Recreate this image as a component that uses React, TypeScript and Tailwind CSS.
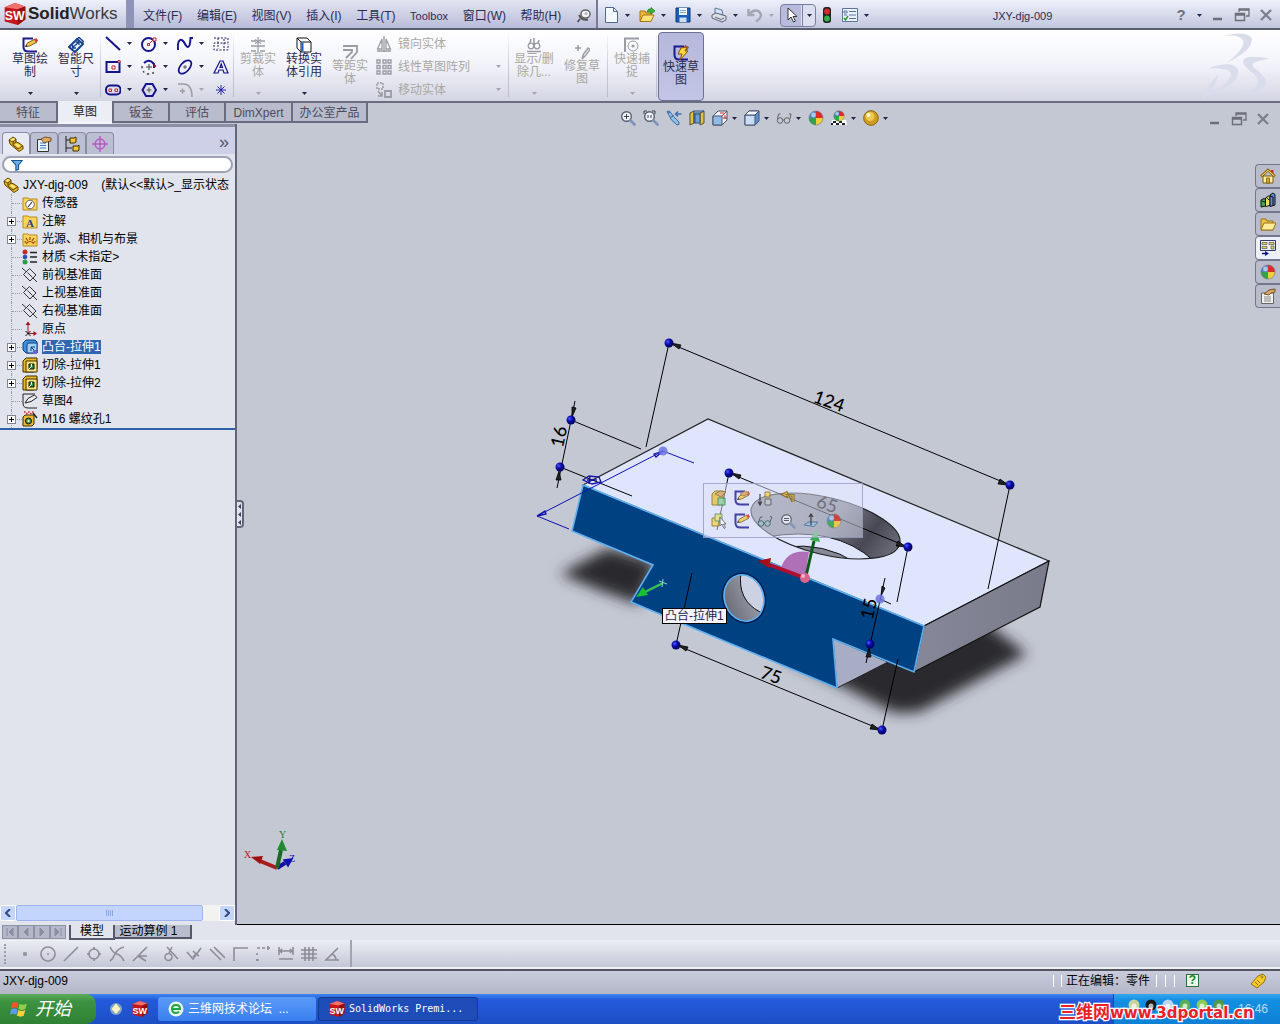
import React from "react";

const Svg = ({
  children,
  size = "w-4 h-4",
}: {
  children: React.ReactNode;
  size?: string;
}) => (
  <svg viewBox="0 0 16 16" className={`${size} shrink-0`} fill="none" aria-hidden="true">
    {children}
  </svg>
);

const Arrow = ({ off = false }: { off?: boolean }) => (
  <svg viewBox="0 0 5 3" className="w-[5px] h-[3px] shrink-0" aria-hidden="true">
    <path d="M0 0h5L2.5 3z" fill={off ? "#a4a6b0" : "#23264a"} />
  </svg>
);

const navy = "#14148c";
const gray = "#9a9ba3";

const ball = (
  <>
    <path d="M8 8V1a7 7 0 0 0-7 7z" fill="#4a86c8" />
    <path d="M8 8V1a7 7 0 0 1 7 7z" fill="#dd2c2a" />
    <path d="M8 8H1a7 7 0 0 0 7 7z" fill="#2fa548" />
    <path d="M8 8h7a7 7 0 0 1-7 7z" fill="#f0cf3c" />
    <circle cx="8" cy="8" r="7" stroke="#5a6a78" strokeOpacity=".5" />
    <circle cx="5.5" cy="5" r="2.4" fill="#fff" fillOpacity=".55" />
  </>
);
const sketchL = <path d="M11 1.500H1.500V10q0 4.500 5 4.500H15" stroke="#1b1b8f" strokeWidth="2" />;
const pencil = (
  <>
    <path d="M3.500 9.500l2-3.500L13 2l2 3-7.500 4z" fill="#f5cb45" stroke="#6b4a12" strokeWidth=".9" />
    <path d="M12 2.500L14.500 1 16 4l-2.300 1.300z" fill="#cf3a30" />
    <path d="M3.300 10l2-.6-1-1.600z" fill="#111" />
  </>
);
const part = (
  <>
    <path d="M1 4l4-3 3 2v3l3 1 4 3v3l-4 2.500-9-7.500z" fill="#e8b820" stroke="#5f4203" />
    <path d="M1 4l4 2 3-2.500M5 6v3l5 4 4.500-3M8 6l-2.500 2" stroke="#5f4203" />
    <path d="M2 4l3-2 2 1-2.500 2zM7 8.500l2-1 3.500 2.500-2 1.500z" fill="#ffe98a" />
  </>
);
const folder = <path d="M1 3h5l1 1h8v11H1z" fill="#fbd45a" stroke="#b98a1c" />;
const plane = (
  <path d="M7.500 1.500l6.500 6.500-6 6L1.500 7.500zM0 1l4 3.500M11 11l4 4M5.500 5.500l5 5" stroke="#333" />
);
const cutBox = (
  <>
    <path d="M1 4l3-3h11v11l-3 3H1z" fill="#e9b92a" stroke="#3f2f05" />
    <path d="M4 4h11v11H4z" fill="#fbe27a" stroke="#3f2f05" />
    <path d="M7 7h5v5H7z" fill="#2f8f3a" stroke="#111" />
    <path d="M7 12l2.500-2.500V7" stroke="#fff" />
  </>
);
const lens = (
  <>
    <circle cx="6.500" cy="6.500" r="4.800" fill="#eef2f8" stroke="#596070" strokeWidth="1.400" />
    <path d="M10.500 10.500l4 4" stroke="#7d93b8" strokeWidth="2.600" strokeLinecap="round" />
  </>
);
const glasses = (
  <>
    <circle cx="4" cy="10.500" r="2.800" fill="#9fc0cc" stroke="#3b5560" />
    <circle cx="10.500" cy="10.500" r="2.800" fill="#9fc0cc" stroke="#3b5560" />
    <path d="M1.500 9l2-5h2M13 9l2-5-2-.5M6.800 10h1" stroke="#3b5560" />
  </>
);
const swCube = (
  <>
    <path d="M.5 3L8 0l7.500 2.500V12L10 16 .5 13.500z" fill="#c3171d" />
    <path d="M.5 3L8 0l7.500 2.500L10 4.500z" fill="#f0706a" />
    <path d="M10 4.500l5.500-2V12L10 16z" fill="#960d12" />
    <text x=".5" y="12.500" fontSize="9" fontWeight="bold" fontFamily="Liberation Sans, sans-serif" fill="#fff">SW</text>
  </>
);

const icons: Record<string, React.ReactNode> = {
  ball,
  part,
  plane,
  cutBox,
  glasses,
  swCube,
  sketch: <>{sketchL}{pencil}</>,
  dim: (
    <>
      <path d="M1 10l8-8 6 5-8 8z" fill="#eaf2ff" stroke="#16418f" strokeWidth="2" />
      <path d="M4.500 10.500l6-5M7.500 5h3.500v3M4.500 7.500v3.500H8" stroke="#16418f" strokeWidth="1.300" />
      <path d="M9 2l2-1.500 4.500 4L14 6" stroke="#16418f" strokeWidth="1.500" />
    </>
  ),
  line: <path d="M1 1l14 13" stroke={navy} strokeWidth="2" />,
  circle: (
    <>
      <circle cx="7.500" cy="8.500" r="6.500" stroke={navy} strokeWidth="2" />
      <path d="M7.500 8.500l5-5" stroke="#c02030" />
      <path d="M6.500 7.500h2v2h-2zM12 2h3v3h-3z" stroke="#c02030" fill="#fff" />
    </>
  ),
  spline: <path d="M1 14C0 2 5 2 7.500 7S13 14 13.500 2H16" stroke={navy} strokeWidth="2" />,
  area: <path d="M1 2h14v5H1v7h14V8M5 2v11M11 3v11" stroke="#23236b" strokeDasharray="2 1.500" />,
  rect: (
    <>
      <path d="M1.500 3h13v10h-13z" stroke={navy} strokeWidth="2" />
      <path d="M7 7h3v3H7zM13 1.500h2v2h-2z" stroke="#c02030" fill="#fff" />
    </>
  ),
  arc: (
    <>
      <path d="M3 4q5-5 10 1v4" stroke={navy} strokeWidth="2" />
      <path d="M1 7q0 8 7 8 5 0 6-4" stroke="#444" strokeWidth="1.500" strokeDasharray="2 3" />
      <path d="M5 8h6M8 5v6" stroke="#444" />
      <circle cx="14" cy="7" r="1.300" fill="#c02030" />
    </>
  ),
  ellipse: (
    <>
      <ellipse cx="8" cy="8" rx="8" ry="4.500" transform="rotate(-48 8 8)" stroke={navy} strokeWidth="1.800" />
      <path d="M6 8h4M8 6v4" stroke="#555" />
    </>
  ),
  text: <path d="M1 14h4l1-3h4l1 3h4L10 2H7zM7 8.500l1.200-3.500L9.500 8.500z" stroke={navy} strokeWidth="1.200" />,
  slot: (
    <>
      <rect x="1" y="3.500" width="14.500" height="9" rx="4" stroke={navy} strokeWidth="2" />
      <path d="M4 7h2.500v2.500H4zM10 7h2.500v2.500H10z" stroke="#c02030" fill="#fff" />
    </>
  ),
  polygon: <><path d="M5 2h6.500L15 8l-3.500 6H5L1.500 8z" stroke={navy} strokeWidth="2" /><path d="M5.500 8h5M8 5.500v5" stroke="#555" /></>,
  fillet: <path d="M1 2h5q9 0 9 13M3 9h5M5.500 6.500v5" stroke={gray} strokeWidth="1.500" />,
  point: <path d="M8 3v10M3 8h10M4.500 4.500l7 7M11.500 4.500l-7 7" stroke="#2424a8" />,
  trim: (
    <>
      <path d="M1 4h5M10 4h5M1 9h14M1 14h5M10 14h5" stroke={gray} strokeWidth="1.500" />
      <path d="M8 0v16M5 2.500l6 4M11 2.500l-6 4" stroke={gray} strokeWidth="1.200" />
    </>
  ),
  convert: (
    <>
      <path d="M1 1h10l4 4v10H5l-4-4z" fill="#fff" stroke="#111" />
      <path d="M1 1l4 4h10M5 5v10" stroke="#111" />
      <path d="M6.500 5.500v9" stroke="#1d5bd0" strokeWidth="2" />
    </>
  ),
  offset: <path d="M1 2h14v6l-6 7M1 6h9v2l-6 6" stroke={gray} strokeWidth="1.800" />,
  mirror: <path d="M8 0v16M6 3L1.500 13H6zM10 3l4.500 10H10zM1 15h14" stroke={gray} strokeWidth="1.300" />,
  pattern: (
    <path d="M1 1h3v3H1zM7 1h3v3H7zM12 1h3v3h-3zM1 6.500h3v3H1zM7 6.500h3v3H7zM12 6.500h3v3h-3zM1 12h3v3H1zM7 12h3v3H7zM12 12h3v3h-3z" stroke={gray} strokeWidth="1.400" />
  ),
  move: (
    <>
      <path d="M1 1h6v6H1z" stroke={gray} strokeWidth="1.500" strokeDasharray="2 1" />
      <path d="M9 9h6v6H9z" stroke={gray} strokeWidth="1.800" />
      <path d="M2 9l4 5M6 10v4H2" stroke={gray} strokeWidth="1.500" />
    </>
  ),
  relations: (
    <>
      <circle cx="5" cy="9" r="2.800" stroke={gray} strokeWidth="1.300" />
      <circle cx="11" cy="9" r="2.800" stroke={gray} strokeWidth="1.300" />
      <path d="M8 1v10M4 6l1-4M12 6l1-3M1 14.500h14" stroke={gray} strokeWidth="1.500" />
    </>
  ),
  repair: <path d="M1 4h6M4 1v6M8 15l1.500-5L14 4l2 1.500L11 12z" stroke={gray} strokeWidth="1.500" />,
  snap: (
    <>
      <path d="M1 15V1.500h14" stroke={gray} strokeWidth="2" />
      <circle cx="9" cy="9" r="5" stroke={gray} />
      <circle cx="9" cy="9" r="1.600" fill={gray} />
    </>
  ),
  rapid: (
    <>
      {sketchL}
      <path d="M12 .5L15.500 2 14 5l-3-1.500z" fill="#d86a30" stroke="#6b3a10" strokeWidth=".6" />
      <path d="M8 3l6-1-2 4h3l-8 9 2-6H5z" fill="#ffd938" stroke="#8a4d10" />
    </>
  ),
  new: <><path d="M2.500.5h8l4 4v11h-12z" fill="#f4f8ff" stroke="#51688c" /><path d="M10.500.5v4h4" stroke="#51688c" /></>,
  open: (
    <>
      <path d="M1 4h5l1 2h5v8H1z" fill="#f0b93a" stroke="#a87410" />
      <path d="M4 8h11l-3 6.500H1z" fill="#ffe27a" stroke="#a87410" />
      <path d="M8 5q1-4 4-3V.5L16 4l-4 3V5z" fill="#3db53b" stroke="#1c7d22" strokeWidth=".7" />
    </>
  ),
  save: <><path d="M1 1h14v14H1z" fill="#1d5fb8" stroke="#0d3877" /><path d="M4 1h8v7H4z" fill="#f2f6ff" /><path d="M4.500 10.500h7V15h-7z" fill="#cfdcf2" /><path d="M5 3.500h6M5 5.500h6" stroke="#8aa" /></>,
  print: <><path d="M4 1l7 2 1 5H4z" fill="#cfe2fa" stroke="#6b7894" /><path d="M1 8l4-2 10 3v4l-4 2-10-4z" fill="#dcdfe6" stroke="#5c6272" /><path d="M4 10l6 2.500 3-1.500" stroke="#5c6272" /></>,
  undo: <path d="M1.500 2v6h6M2 7.500q5-6 10-3 5 5-3 10" stroke="#a3a7b5" strokeWidth="2.500" />,
  cursor: <path d="M4 1v12l3-3 2.500 5 2-1-2.500-4.500h4z" fill="#fff" stroke="#333" />,
  traffic: (
    <>
      <rect x="4" y="0" width="8" height="16" rx="3" fill="#222" />
      <circle cx="8" cy="4.500" r="2.900" fill="#d52a2a" />
      <circle cx="8" cy="11.500" r="2.900" fill="#33b04a" />
    </>
  ),
  options: <><path d="M.5 1.500h15v13H.5z" fill="#eaf1fa" stroke="#5c7899" /><path d="M2 4h3v2H2zM7 4.500h7M7 8h7M7 11.500h7M2 8h3" stroke="#5c7899" /><path d="M2 11l1.500 2L6 9" stroke="#279a32" strokeWidth="1.500" /></>,
  pin: <><path d="M4 11l-2.500 3" stroke="#444" strokeWidth="1.500" /><ellipse cx="9.500" cy="6" rx="4.500" ry="4" fill="#f3f3f7" stroke="#666" strokeWidth="1.500" /><path d="M3 7q3 6 9 4.500" stroke="#555" strokeWidth="2" /><circle cx="10" cy="5.500" r="1.500" fill="#b5b6c2" /></>,
  min: <path d="M3 12h9" stroke="#6c6f7a" strokeWidth="2.500" />,
  restore: <><path d="M5 5V2h10v7h-3" stroke="#6c6f7a" strokeWidth="1.300" /><path d="M5 3h10" stroke="#6c6f7a" strokeWidth="1.500" /><path d="M1.500 6.500h9v7h-9zM1 8h10" stroke="#6c6f7a" strokeWidth="1.400" /></>,
  close: <path d="M3 3l10 10M13 3L3 13" stroke="#7d808c" strokeWidth="2.300" />,
  zoomFit: <>{lens}<path d="M4 6.500h5M6.500 4v5" stroke="#444" /></>,
  zoomArea: <>{lens}<path d="M1 1h3M1 1v3M12 1h-3M12 1v3M5 5v3M8 5v3" stroke="#444" /></>,
  prevView: <><path d="M1 1.500l2.500-.5 4 5.500 5.500 5.500q1 3-2 3L5.500 10z" fill="#8fbfe8" stroke="#3f6a9e" /><path d="M4 7.500l4-2M2 3l2-1" stroke="#3f6a9e" /><path d="M15.500 4H10M12 1.500L9.500 4 12 6.500" stroke="#3a6fb5" strokeWidth="1.500" /></>,
  section: <><path d="M1 3l4-2v12l-4 2zM11 3l4-2v12l-4 2z" fill="#e2c33e" stroke="#59512a" /><path d="M5 1h10l-4 2H6v10l-1 0z" fill="#a9c8ea" stroke="#34507a" /><path d="M6 4h5v9H6z" fill="#6ea0d8" stroke="#34507a" /></>,
  orient: <><path d="M1 6l5-5h9v9l-5 5H1z" fill="#eef3fb" stroke="#4a5468" /><path d="M1 6h9v9H1z" fill="#8fbbe6" stroke="#4a5468" /><path d="M10 6l5-5M8 3h4M13 5v4M11 8h4" stroke="#b33" /></>,
  display: <><path d="M1 5l4-4h10v10l-4 4H1z" fill="#5d8fd6" stroke="#43506a" /><path d="M1 5h10v10H1z" fill="#c9ddf5" stroke="#43506a" /><path d="M1 5l4-4h10l-4 4z" fill="#f4f8ff" stroke="#43506a" /></>,
  hide: <g opacity=".75"><circle cx="4" cy="10.500" r="2.800" stroke="#444" /><circle cx="11" cy="10.500" r="2.800" stroke="#444" /><path d="M1.500 9l1-5h2M14 9l1-5h-2M6.800 10h1.500" stroke="#444" /></g>,
  scene: <><path d="M1 10h14l1 5H0z" fill="#fff" /><path d="M2 11h3v2H2zM8 11h3v2H8zM5 13h3v2H5zM11 13h3v2h-3zM0 13h2v2H0z" fill="#222" /><g transform="translate(2 0) scale(.75)">{ball}</g></>,
  gold: <><circle cx="8" cy="8" r="7.300" fill="#cf9d20" stroke="#8a6410" /><circle cx="7" cy="6.500" r="4.500" fill="#ecc84e" /><circle cx="5.500" cy="5" r="2" fill="#fff6cc" /></>,
  property: <><path d="M1.500 3.500h11v12h-11z" fill="#eaf4ff" stroke="#333" /><path d="M4 7h6M4 9.500h6M4 12h6" stroke="#3c7cc4" /><path d="M5 3l4-2 6 1v3l-4 1-3 1z" fill="#e0a960" stroke="#5b3a10" strokeWidth=".8" /></>,
  config: <><path d="M2 0v16M2 4h4M2 12h6" stroke="#222" /><path d="M6 2h4l2-1v5l-2 1H6zM9 10h5l1-1v5l-1 1H9z" fill="#f2c62e" stroke="#3f2f05" /></>,
  target: <><circle cx="8" cy="8" r="5" stroke="#b85cc4" strokeWidth="1.500" /><path d="M8 0v16M0 8h16" stroke="#b85cc4" strokeWidth="1.500" /></>,
  filter: <path d="M1 2h14L10 8v6l-3.500 1V8z" fill="#6db2ee" stroke="#1b568f" strokeWidth="1.500" />,
  sensor: <>{folder}<circle cx="8" cy="9.500" r="4.300" fill="#fff" stroke="#666" /><path d="M6 12l4-5" stroke="#333" strokeWidth="1.200" /></>,
  note: <>{folder}<text x="4" y="13.500" fontSize="11" fontWeight="bold" fontFamily="Liberation Serif, serif" fill="#2a3f90">A</text></>,
  light: <>{folder}<path d="M4 13q4-5 8 0M8 6v3M4 7l2 3M12 7l-2 3M2.500 10.500l2 1M13.500 10.500l-2 1" stroke="#a0400c" strokeWidth="1.200" /></>,
  material: <><circle cx="3" cy="3" r="2.500" fill="#c02a2a" /><circle cx="3" cy="8" r="2.300" fill="#2a50c0" /><circle cx="3" cy="13" r="2.500" fill="#2aa040" /><path d="M8 3.500h7M8 8h7M8 13h7" stroke="#222" strokeWidth="1.500" /></>,
  origin: <><path d="M6 13V3M6 12.500h7" stroke="#a5121c" /><path d="M3.500 4L6 .5 8.500 4zM11.500 10l3.500 2.500-3.500 2.500z" fill="#a5121c" /><path d="M3.500 10l5 5M8.500 10l-5 5" stroke="#111" /></>,
  boss: <><path d="M1 4l3-3h9l2 2v11H4l-3-3z" fill="#3f8fdc" stroke="#0d3f7a" /><path d="M5 6q0-2 2-2h8v10H5z" fill="#a5d0f5" stroke="#0d3f7a" /><path d="M9 8l6 6M9 12V8h4" stroke="#0d3f7a" /><path d="M11 11h4v4h-4z" fill="#6d63cc" /></>,
  sketch4: <><path d="M13 1H1v9q0 5 5 5h9" stroke="#222" /><path d="M3 10l3-4.500L12.500 2 15 4.500 9 8.500z" fill="#eee" stroke="#222" /></>,
  hole: <><path d="M1 6l2-2h9v9l-2 2H1z" fill="#e9b92a" stroke="#3f2f05" /><circle cx="6.500" cy="10" r="3" fill="#4f9f45" stroke="#111" /><circle cx="6.500" cy="10" r="1" fill="#fff" /><path d="M2 1h1.500M6 1h1.500M10 1h1.500M4 2.500h1.500M8 2.500h1.500" stroke="#d02020" strokeWidth="1.300" /><path d="M11 2l4 5" stroke="#222" strokeWidth="1.500" /></>,
  home: <><path d="M3 8h10v7H3z" fill="#fff0a0" stroke="#7c5a10" /><path d="M11 2h2.500v4H11z" fill="#c03030" /><path d="M1 8.500L8 2l7 6.500" stroke="#8b6410" strokeWidth="2.500" /><path d="M1.500 8L8 2.300 14.500 8" stroke="#ffe070" /><path d="M6.500 10h3v5h-3z" fill="#d9a53a" stroke="#7c5a10" strokeWidth=".8" /></>,
  library: <><path d="M1 8l3-1.500 1.500 1V14L1 15z" fill="#3faa4c" stroke="#111" /><path d="M5.500 6l3-2 1.500 1v8.500l-4.500 1z" fill="#ecdf62" stroke="#111" /><path d="M10 3l3-2 2 1.500V13l-5 1.500z" fill="#5b8ad8" stroke="#111" /><path d="M2 9l3 1M6 5l3 3M10 4l3 1v9" stroke="#111" /></>,
  explorer: <><path d="M1 3h5l1 2h6v9H1z" fill="#e9c24a" stroke="#9a7316" /><path d="M4 7h12l-3 7H1z" fill="#fdeb9b" stroke="#9a7316" /></>,
  palette: <><path d="M.5.500h15v10H.5z" fill="#eef" stroke="#333a66" /><path d="M2 2.500h5v2H2zM2 6.500h5v2H2zM9 2.500h5v2H9zM11 6h3v3h-3z" fill="#e5d65a" stroke="#555" strokeWidth=".7" /><path d="M2 13.500h5" stroke="#14148c" strokeWidth="1.500" /><path d="M5 11l4 2.500L5 16z" fill="#14148c" /></>,
  custom: <><path d="M1.500 5h12v10.500h-12z" fill="#f1f1ee" stroke="#666" /><path d="M4 9h7M4 11h7M4 13h7" stroke="#888" /><path d="M4 6l5-4 6-1v3l-4 1-2 2z" fill="#dba764" stroke="#5b3a10" strokeWidth=".8" /></>,
  editFeature: <><path d="M1 4l3-3h8v10l-3 4H1z" fill="#e9c347" stroke="#8a6b18" /><path d="M4 4l5-3 6 1-5 5z" fill="#d8a15c" stroke="#8a6b18" /><path d="M7 8h7v7H7z" fill="#8fd09a" stroke="#2b7d3b" /></>,
  editSketch: <>{sketchL}{pencil}<path d="M6 4l5-3 4 2-5 3z" fill="#d8a15c" stroke="#8a5b28" strokeWidth=".7" /></>,
  rollback: <><path d="M3 4v10M1 11.500L3 15l2-3.500" stroke="#222" strokeWidth="1.200" /><path d="M8 2h5v5H8z" fill="#f2d65a" stroke="#8a6b18" /><path d="M8 9h6v6H8z" fill="#c5c8cc" stroke="#555" /></>,
  suppress: <path d="M14 12V4.500H5M7 1.500L1.500 4.500 7 7.500V6h5v6z" fill="#f0c93a" stroke="#8a6b18" strokeWidth="1.200" />,
  selectOther: <><path d="M1 5h7v8H1z" fill="#efd257" stroke="#8a6b18" /><path d="M4 1h7v7H4z" fill="#efe07a" stroke="#459050" /><path d="M9 4v9l2-2 2 4.500 1.500-1-2-3.500H15z" fill="#fff" stroke="#555" /></>,
  zoomSel: <>{lens}<path d="M4 5.500h5M4 7.500h5" stroke="#445" /></>,
  normal: <><path d="M1 12l4-3h10l-4 4.500z" fill="#9ec0e2" stroke="#3c6796" /><path d="M8 12V1M6 4l2-3 2 3" stroke="#222" strokeWidth="1.200" /></>,
  tag: <><path d="M1 11l7-8 5-2 3 3-2 5-7 6z" fill="#f5c928" stroke="#92700a" /><circle cx="12" cy="4" r="1" fill="#fff" stroke="#92700a" /><path d="M5 9l3 3M7 7l3 3" stroke="#92700a" /></>,
};

const Icon = ({ name }: { name: string }) => <Svg>{icons[name]}</Svg>;

// icon with a drop-down arrow beside it
const Cell = ({ icon, off, label }: { icon: string; off?: boolean; label: string }) => (
  <button aria-label={label} className="flex items-center gap-[6px] w-9 h-[23px]">
    <Icon name={icon} />
    <Arrow off={off} />
  </button>
);

const Divider = () => (
  <div className="w-px my-1 mx-px shrink-0 bg-linear-to-b from-[#f4f4fa] via-[#c9cbd9] to-[#b9bccd]" />
);

const BigButton = ({
  icon,
  lines,
  off = false,
  arrow = false,
  low = false,
  wide = false,
}: {
  icon: string;
  lines: string[];
  off?: boolean;
  arrow?: boolean;
  low?: boolean;
  wide?: boolean;
}) => (
  <button
    className={`${wide ? "w-12" : "w-[46px]"} ${low ? "pt-3" : "pt-[5px]"} ${
      off ? "text-[#a9a8a2]" : "text-[#2b2b52]"
    } h-[70px] shrink-0 flex flex-col items-center`}
  >
    <Icon name={icon} />
    <span className="leading-[13px] text-center">
      {lines[0]}
      <br />
      {lines[1]}
    </span>
    {arrow && (
      <span className="mt-auto mb-[7px] flex">
        <Arrow off={off} />
      </span>
    )}
  </button>
);

const menus = ["文件(F)", "编辑(E)", "视图(V)", "插入(I)", "工具(T)", "Toolbox", "窗口(W)", "帮助(H)"];

const TitleBar = () => (
  <header className="h-[30px] flex items-center border-b-2 border-[#5b5e70] bg-linear-to-b from-[#eef0fb] to-[#c3c7dd] text-[#2b2b52]">
    <div className="w-[126px] flex items-center gap-[2px] pl-1 shrink-0">
      <Svg size="w-[22px] h-[22px]">{swCube}</Svg>
      <span className="text-[17px] leading-5 text-[#3a3a40]">
        <b className="text-[#222]">Solid</b>Works
      </span>
    </div>
    <div className="w-2 h-full bg-[#8f93b8] shrink-0" />
    <nav className="w-[464px] h-full shrink-0 flex items-center justify-between pl-[9px] pr-1 pt-[3px] bg-linear-to-b from-[#e3e5f3] to-[#b9bcd8] border-r-2 border-[#787b92]">
      {menus.map((m) => (
        <button key={m} className={m === "Toolbox" ? "text-[11px]" : ""}>
          {m}
        </button>
      ))}
      <Icon name="pin" />
    </nav>
    <div className="flex items-center pl-[5px] pt-[2px] shrink-0">
      <Cell icon="new" label="新建" />
      <Cell icon="open" label="打开" />
      <Cell icon="save" label="保存" />
      <Cell icon="print" label="打印" />
      <div className="w-[33px]">
        <Cell icon="undo" off label="撤消" />
      </div>
      <button aria-label="选择" className="flex items-center w-9 h-[23px] border border-[#7b7ea0] rounded-[4px] bg-linear-to-r from-[#b9bbdc] from-60% to-[#dcdff0] to-60%">
        <span className="w-[22px] h-full flex items-center justify-center border-r border-[#7b7ea0]">
          <Icon name="cursor" />
        </span>
        <span className="flex-1 flex justify-center">
          <Arrow />
        </span>
      </button>
      <button aria-label="重建模型" className="ml-[3px] mr-[7px]">
        <Icon name="traffic" />
      </button>
      <Cell icon="options" label="选项" />
    </div>
    <h1 className="flex-1 text-center text-[11px] pl-1 pt-[3px]">JXY-djg-009</h1>
    <div className="flex items-center gap-2 pr-[6px] pl-[10px] pt-[2px] shrink-0">
      <button className="w-4 text-[15px] font-bold text-[#6c6f7a] leading-4">?</button>
      <Arrow />
      <button aria-label="最小化"><Icon name="min" /></button>
      <button aria-label="还原"><Icon name="restore" /></button>
      <button aria-label="关闭"><Icon name="close" /></button>
    </div>
  </header>
);

const Ribbon = () => (
  <section className="h-[73px] flex pl-[7px] pt-[2px] border-b-2 border-[#6b6e80] bg-linear-to-b from-white via-[#f2f3fa] to-[#d3d5e3] overflow-hidden">
    <BigButton icon="sketch" lines={["草图绘", "制"]} arrow />
    <BigButton icon="dim" lines={["智能尺", "寸"]} arrow />
    <Divider />
    <div className="grid grid-cols-[36px_36px_36px_16px] auto-rows-[23px] mx-[3px] shrink-0 h-[69px]">
      <Cell icon="line" label="直线" />
      <Cell icon="circle" label="圆" />
      <Cell icon="spline" label="样条曲线" />
      <button aria-label="区域"><Icon name="area" /></button>
      <Cell icon="rect" label="矩形" />
      <Cell icon="arc" label="圆弧" />
      <Cell icon="ellipse" label="椭圆" />
      <button aria-label="文字"><Icon name="text" /></button>
      <Cell icon="slot" label="槽口" />
      <Cell icon="polygon" label="多边形" />
      <Cell icon="fillet" off label="圆角" />
      <button aria-label="点"><Icon name="point" /></button>
    </div>
    <Divider />
    <BigButton icon="trim" lines={["剪裁实", "体"]} off arrow />
    <BigButton icon="convert" lines={["转换实", "体引用"]} arrow />
    <BigButton icon="offset" lines={["等距实", "体"]} off low />
    <div className="w-[134px] shrink-0 pl-[3px] pr-[6px] text-[#a9a8a2]">
      {[
        ["mirror", "镜向实体"],
        ["pattern", "线性草图阵列"],
        ["move", "移动实体"],
      ].map(([icon, label], i) => (
        <button key={label} className="w-full h-[23px] flex items-center gap-[6px]">
          <Icon name={icon} />
          <span>{label}</span>
          {i > 0 && (
            <span className="ml-auto flex">
              <Arrow off />
            </span>
          )}
        </button>
      ))}
    </div>
    <Divider />
    <BigButton icon="relations" lines={["显示/删", "除几..."]} off arrow wide />
    <BigButton icon="repair" lines={["修复草", "图"]} off low wide />
    <Divider />
    <BigButton icon="snap" lines={["快速捕", "捉"]} off arrow />
    <Divider />
    <div className="w-[46px] h-[69px] shrink-0 flex justify-center border border-[#6d6f94] rounded-[4px] bg-linear-to-b from-[#b6b8dc] to-[#c3c5e6] overflow-hidden">
      <BigButton icon="rapid" lines={["快速草", "图"]} low />
    </div>
    <svg viewBox="0 0 80 72" className="w-20 h-[71px] ml-auto shrink-0" fill="none" aria-hidden="true">
      <g fill="#d9dcea">
        <path d="M23 4Q46-2 52 6 54 18 27 31 46 16 43 8 38 2 23 4z" />
        <path d="M8 37Q32 28 38 38 40 54 8 64L2 68Q6 54 18 43 16 52 9 61 30 53 31 42 28 36 8 37z" />
        <path d="M70 27Q44 22 43 30 44 36 56 44 62 52 54 57 44 62 33 60 54 68 66 54 68 46 54 36 48 30 70 27z" />
      </g>
    </svg>
  </section>
);

const viewTools: [string, string, boolean][] = [
  ["zoomFit", "整屏显示全图", false],
  ["zoomArea", "局部放大", false],
  ["prevView", "上一视图", false],
  ["section", "剖面视图", false],
  ["orient", "视图定向", true],
  ["display", "显示样式", true],
  ["hide", "隐藏项目", true],
  ["ball", "编辑外观", false],
  ["scene", "应用布景", true],
  ["gold", "视图设定", true],
];

const tab = "h-5 border-r-2 border-b-2 border-[#696c7e] bg-[#b9bccd] text-[#4b4d5c] text-center leading-5";

const TabRow = () => (
  <div className="h-[21px] flex items-start bg-[#c4c8d3]">
    <nav className="flex shrink-0">
      <button className={`${tab} w-[58px]`}>特征</button>
      <button className="w-[54px] h-[23px] -mt-[2px] pt-px relative z-10 bg-[#eceef6] text-[#222] border-b-2 border-[#f4f5fa] leading-5">
        草图
      </button>
      <button className={`${tab} w-[58px] border-l-2`}>钣金</button>
      <button className={`${tab} w-14`}>评估</button>
      <button className={`${tab} w-[67px]`}>DimXpert</button>
      <button className={`${tab} w-[75px]`}>办公室产品</button>
    </nav>
    <div className="flex-1 flex justify-center gap-[7px] pt-[7px] pr-[67px] relative z-10">
      {viewTools.map(([icon, label, arrow]) => (
        <button key={icon} aria-label={label} className="flex items-center gap-1">
          <Icon name={icon} />
          {arrow && <Arrow />}
        </button>
      ))}
    </div>
    <div className="flex gap-2 pt-2 pr-[9px] relative z-10">
      <button aria-label="最小化文档"><Icon name="min" /></button>
      <button aria-label="还原文档"><Icon name="restore" /></button>
      <button aria-label="关闭文档"><Icon name="close" /></button>
    </div>
  </div>
);

const tree = [
  { icon: "sensor", label: "传感器" },
  { icon: "note", label: "注解", plus: true },
  { icon: "light", label: "光源、相机与布景", plus: true },
  { icon: "material", label: "材质 <未指定>" },
  { icon: "plane", label: "前视基准面" },
  { icon: "plane", label: "上视基准面" },
  { icon: "plane", label: "右视基准面" },
  { icon: "origin", label: "原点" },
  { icon: "boss", label: "凸台-拉伸1", plus: true, selected: true },
  { icon: "cutBox", label: "切除-拉伸1", plus: true },
  { icon: "cutBox", label: "切除-拉伸2", plus: true },
  { icon: "sketch4", label: "草图4" },
  { icon: "hole", label: "M16 螺纹孔1", plus: true },
];

const FeaturePanel = () => (
  <aside className="w-[237px] shrink-0 flex flex-col border-r-2 border-[#63667a] bg-[#e1e4ec]">
    <div className="h-[30px] pt-1 px-[2px] flex items-end bg-[#cdd0e6] border-t-[3px] border-[#8c8fa5]">
      {["part", "property", "config", "target"].map((n, i) => (
        <button
          key={n}
          aria-label={n}
          className={`w-7 h-[22px] flex items-center justify-center border border-b-0 border-[#8a8ca5] rounded-t-[4px] ${
            i === 0 ? "bg-[#e8eaf3]" : "bg-[#bcbed2]"
          }`}
        >
          <Icon name={n} />
        </button>
      ))}
      <button className="ml-auto mr-1 mb-[2px] text-[18px] leading-5 text-[#555870]">»</button>
    </div>
    <label className="mx-[2px] mt-[2px] mb-[3px] h-[17px] flex items-center pl-[7px] gap-1 bg-white border-2 border-[#9fa2b5] rounded-full">
      <Svg size="w-3 h-3">{icons.filter}</Svg>
      <input aria-label="过滤器" className="flex-1 min-w-0 h-3 outline-none" />
    </label>
    <div className="pl-[3px] h-[18px] flex items-center gap-1 overflow-hidden whitespace-pre">
      <Icon name="part" />
      <span>JXY-djg-009{"    "}(默认&lt;&lt;默认&gt;_显示状态</span>
    </div>
    <ul className="border-b-2 border-[#2f5fa5]">
      {tree.map((t) => (
        <li key={t.label} className="h-[18px] flex items-center relative">
          <span className="w-3 h-full border-r border-dotted border-[#9a9ca8]" />
          <span className="w-[10px] border-t border-dotted border-[#9a9ca8]" />
          {t.plus && (
            <button aria-label="展开" className="absolute left-[7px] top-[5px] w-[9px] h-[9px] bg-white border border-[#808494] flex items-center justify-center">
              <svg viewBox="0 0 5 5" className="w-[5px] h-[5px]" aria-hidden="true">
                <path d="M0 2h5v1H0zM2 0h1v5H2z" fill="#000" />
              </svg>
            </button>
          )}
          <Icon name={t.icon} />
          <span className={`ml-1 leading-[14px] ${t.selected ? "bg-[#2f66b0] text-white" : ""}`}>{t.label}</span>
        </li>
      ))}
    </ul>
    <div className="mt-auto mb-1 h-4 flex items-center bg-[#f2f2f0]">
      <button aria-label="向左" className="w-4 h-4 rounded-[2px] bg-[#c5d5fb] border border-white flex items-center justify-center">
        <svg viewBox="0 0 6 8" className="w-[6px] h-2" fill="none" aria-hidden="true"><path d="M5 0L1 4l4 4" stroke="#2f4a80" strokeWidth="2" /></svg>
      </button>
      <div className="flex-1 h-4 pr-4">
        <div className="h-4 rounded-[2px] border border-[#9db4ee] bg-[#c4d5fd] flex items-center justify-center gap-px">
          {[0, 1, 2, 3].map((i) => (
            <i key={i} className="w-px h-[6px] bg-[#8ca7e4]" />
          ))}
        </div>
      </div>
      <button aria-label="向右" className="w-4 h-4 rounded-[2px] bg-[#c5d5fb] border border-white flex items-center justify-center">
        <svg viewBox="0 0 6 8" className="w-[6px] h-2" fill="none" aria-hidden="true"><path d="M1 0l4 4-4 4" stroke="#2f4a80" strokeWidth="2" /></svg>
      </button>
    </div>
  </aside>
);

const dots = [
  [669, 343], [1010, 485], [571, 420], [560, 467], [729, 473],
  [908, 547], [870, 644], [676, 645], [882, 730],
];

const Model = () => (
  <svg viewBox="237 124 1043 800" className="absolute inset-0 w-full h-full" fill="none" role="img" aria-label="JXY-djg-009">
    <defs>
      <filter id="soft" x="-30%" y="-50%" width="160%" height="200%">
        <feGaussianBlur stdDeviation="7" />
      </filter>
      <linearGradient id="bore" x1="0" x2="1" y1=".2" y2=".6">
        <stop offset="0" stopColor="#8b8d9b" />
        <stop offset=".55" stopColor="#7b7d8a" />
        <stop offset=".8" stopColor="#474853" />
        <stop offset="1" stopColor="#6d6f7c" />
      </linearGradient>
      <linearGradient id="drill" x1="0" x2="1" y1=".7" y2=".2">
        <stop offset="0" stopColor="#62646f" />
        <stop offset="1" stopColor="#b4b7c5" />
      </linearGradient>
      <linearGradient id="side" x1="0" x2="1">
        <stop offset="0" stopColor="#868899" />
        <stop offset="1" stopColor="#797b8b" />
      </linearGradient>
      <radialGradient id="dot" cx=".35" cy=".35">
        <stop offset="0" stopColor="#4a5cf0" />
        <stop offset=".6" stopColor="#0b0bb4" />
        <stop offset="1" stopColor="#05056e" />
      </radialGradient>
      <clipPath id="boreClip">
        <ellipse cx="825.500" cy="526" rx="76.300" ry="28.500" transform="rotate(13.500 825.500 526)" />
      </clipPath>
      <clipPath id="drillClip">
        <ellipse cx="744" cy="598" rx="19" ry="23" transform="rotate(-18 744 598)" />
      </clipPath>
    </defs>

    {/* shadow */}
    <path d="M560 574l48-26 49 14-18 42-35-12z" fill="#2a2b2e" filter="url(#soft)" />
    <path d="M780 655L985 622l42 32-108 58-24 1z" fill="#2a2b2e" filter="url(#soft)" />

    {/* solid */}
    <path d="M583 485L708 419 1049 561 924 626z" fill="#dfe5fd" stroke="#222" strokeWidth="1.200" />
    <path d="M924 626L1049 561 1040 607 914 672z" fill="url(#side)" stroke="#111" strokeWidth="1.200" />
    <path d="M833 639L837 688 888 662z" fill="#a8acc4" stroke="#222" />
    <path d="M583 485L924 626 914 672 833 639 837 688 631 602 653 565 572 531z" fill="#004182" stroke="#5fb0f0" strokeWidth="1.600" />

    {/* large bore */}
    <g clipPath="url(#boreClip)">
      <path d="M740 480h170v90H740z" fill="url(#bore)" />
      <path d="M766 537Q835 525 874 561L800 575z" fill="#dfe5fd" stroke="#111" />
      <path d="M784 547Q825 542 856 563L810 572z" fill="#868896" stroke="#111" />
    </g>
    <ellipse cx="825.500" cy="526" rx="76.300" ry="28.500" transform="rotate(13.500 825.500 526)" stroke="#222" strokeWidth="1.200" />

    {/* tapped hole */}
    <ellipse cx="744" cy="598" rx="21" ry="25" transform="rotate(-18 744 598)" stroke="#031f4e" strokeWidth="1.500" />
    <g clipPath="url(#drillClip)">
      <path d="M720 570h50v56h-50z" fill="url(#drill)" />
      <path d="M741 572Q737 600 760 612h10v-40z" fill="#cdd1e4" stroke="#111" />
    </g>
    <ellipse cx="744" cy="598" rx="19.500" ry="23.500" transform="rotate(-18 744 598)" stroke="#62b4f4" strokeWidth="1.600" />

    {/* dimension lines */}
    <path
      d="M669 343L1010 485M669 343L646 447M1010 485L988 589M575 401L557 488M571 420L641 449M560 467L632 496M729 473L908 547M729 473L717 530M908 547L897 602M885 578L866 663M880 599L891 604M676 645L882 730M676 645L692 573M882 730L898 659"
      stroke="#000"
    />
    <path
      d="M671 343l10 2-2 4zM1008 485l-10-1 2-5zM731 473l10 2-2 4zM906 547l-10-1 2-5zM678 645l10 2-2 4zM880 730l-10-1 2-5zM572 417l0-10 4 1zM559 471l-3 9 5 0zM881 596l1-10 3 2zM869 648l-3 9 5 0z"
      fill="#222"
      stroke="#000"
      strokeWidth=".8"
    />
    <path d="M537 516L663 451M663 451L694 463M537 516L569 529" stroke="#1010b0" />
    <path d="M537 516l8-5 1 3zM663 451l-9 3 2 3zM583 480l6-4 10 1 2 5-9 2zM587 480h10M590 476l-1 8" stroke="#1010b0" strokeWidth="1.300" />
    {dots.map(([x, y]) => (
      <circle key={`${x}-${y}`} cx={x} cy={y} r="4.500" fill="url(#dot)" />
    ))}
    <circle cx="663" cy="451" r="4.500" fill="#6f74e0" fillOpacity=".85" />
    <circle cx="880" cy="599" r="4.500" fill="#6f74e0" fillOpacity=".85" />

    <g fontFamily="Lato, sans-serif" fontSize="18" fontWeight="500" fill="#000" textAnchor="middle">
      <text transform="translate(827 407) rotate(20)">124</text>
      <text transform="translate(565 438) rotate(-77)">16</text>
      <text transform="translate(825 510) rotate(20)">65</text>
      <text transform="translate(769 681) rotate(20)">75</text>
      <text transform="translate(875 610) rotate(-78)">15</text>
    </g>

    {/* manipulator */}
    <path d="M805 578L781 568Q787 549 809 552z" fill="#b070b8" />
    <path d="M805 578L770 565" stroke="#b01030" strokeWidth="4" />
    <path d="M758 561l13-3-2 10z" fill="#a80c14" />
    <path d="M806 576L814 541" stroke="#0d5a1c" strokeWidth="3" />
    <path d="M816 530l4 12-10-2z" fill="#2fb04a" />
    <circle cx="805" cy="578" r="5" fill="#d8668c" />
    <circle cx="803" cy="576" r="2" fill="#f3b4c8" />
    <path d="M663 583L645 592" stroke="#35c84e" strokeWidth="2" />
    <path d="M659 581l8 3M663 579l-1 8" stroke="#8fd8c0" />
    <path d="M636 597l7-10 5 8z" fill="#19c030" />

    {/* view triad */}
    <path d="M277 868L260 861" stroke="#a81c1c" strokeWidth="4" />
    <path d="M251 857l12-1-3 8z" fill="#a01010" />
    <path d="M277 868L285 863" stroke="#10109a" strokeWidth="4" />
    <path d="M284 860l8-1-4 7z" fill="#1010b0" stroke="#1010b0" strokeWidth="1.500" />
    <path d="M277 868L281 850" stroke="#186a24" strokeWidth="4" />
    <path d="M282 839l5 12-10-1z" fill="#1f8a30" />
    <g fontFamily="Liberation Serif, serif" fontSize="10">
      <text x="244" y="858" fill="#c01818">X</text>
      <text x="279" y="838" fill="#187a24">Y</text>
      <text x="289" y="862" fill="#1010c0">Z</text>
    </g>
  </svg>
);

const contextTools = [
  "editFeature", "editSketch", "rollback", "suppress", "", "",
  "selectOther", "sketch", "glasses", "zoomSel", "normal", "ball",
];

const Viewport = () => (
  <main className="flex-1 relative overflow-hidden bg-[#c4c8d3] border-b border-black">
    <Model />
    <div className="absolute left-[466px] top-[359px] w-[160px] h-[55px] px-[3px] pt-[2px] grid grid-cols-[repeat(6,23px)] auto-rows-[23px] border border-[#8d8fbd]/70 bg-[#dfe3f8]/50">
      {contextTools.map((n, i) =>
        n ? (
          <button key={i} aria-label={n} className="flex items-center justify-center opacity-80">
            <Icon name={n} />
          </button>
        ) : (
          <span key={i} />
        )
      )}
    </div>
    <div role="tooltip" className="absolute left-[425px] top-[484px] px-[2px] h-4 leading-[14px] whitespace-nowrap border border-black bg-[#f4f5fb] text-[#23234a]">
      凸台-拉伸1
    </div>
    <button aria-label="折叠面板" className="absolute -left-px top-[376px] w-2 h-7 flex flex-col items-center justify-around border-2 border-l-0 border-[#63667a] rounded-r-[4px] bg-[#e1e4ec]">
      {[0, 1, 2].map((i) => (
        <svg key={i} viewBox="0 0 3 5" className="w-[3px] h-[5px]" aria-hidden="true"><path d="M3 0v5L0 2.500z" fill="#3d4060" /></svg>
      ))}
    </button>
    <div className="absolute right-0 top-10 flex flex-col">
      {["home", "library", "explorer", "palette", "ball", "custom"].map((n) => (
        <button
          key={n}
          aria-label={n}
          className={`w-[25px] h-6 flex items-center justify-center border border-r-0 border-[#74778c] rounded-l-[4px] ${
            n === "palette" ? "bg-[#eef0f8]" : "bg-[#b9bccb]"
          }`}
        >
          <Icon name={n} />
        </button>
      ))}
    </div>
  </main>
);

const sketchTools = [
  "M8 7h1v2H7V7z",
  "M1 8a7 7 0 1 0 14 0a7 7 0 1 0-14 0M7 8h2",
  "M1 15L15 1",
  "M3 8a5 5 0 1 0 10 0a5 5 0 1 0-10 0M8 1v3M8 12v3M1 8h3M12 8h3",
  "M1 1q3 6 7 7t7 7M15 1q-7 2-9 7t-5 7",
  "M1 15L15 1M6 10h9M6 10l8 5",
  "M2 11a3.500 3.500 0 1 0 7 0a3.500 3.500 0 1 0-7 0M4 1l11 12M6 7l3-6",
  "M1 6l6 7L15 2M7 5l3 3-3 3M10 8l3 2",
  "M1 3l11 11M5 1l11 11",
  "M2 15V2h14",
  "M2 15v-2M2 9V7M2 2h3M7 2h3M12 2h3M13 0v4M1 14h3",
  "M1 1v8M15 1v8M2 5h12M4 3L2 5l2 2M12 3l2 2-2 2M1 13h14",
  "M0 4h16M0 8h16M0 12h16M4 1v14M8 1v14M12 1v14",
  "M14 2L2 14h13M8 8q4 2 4 6",
];

const Bottom = () => (
  <>
    <div className="h-[15px] flex pl-[2px] bg-[#e1e4ec]">
      {["M1 0v8M7 0L3 4l4 4z", "M6 0L2 4l4 4z", "M2 0l4 4-4 4z", "M1 0l4 4-4 4zM7 0v8"].map((d) => (
        <button key={d} aria-label="滚动标签" className="w-4 h-[14px] flex items-center justify-center border border-[#8e91a4] bg-[#b4b7c8]">
          <svg viewBox="0 0 8 8" className="w-2 h-2" aria-hidden="true"><path d={d} fill="#8a8da0" stroke="#8a8da0" /></svg>
        </button>
      ))}
      <button className="ml-[3px] w-[46px] h-[15px] leading-[13px] border-2 border-t-0 border-[#55586a] bg-[#e1e4ec]">模型</button>
      <button className="w-[77px] h-[14px] pr-2 leading-[13px] border-r-2 border-b-2 border-[#55586a] bg-[#b9bccd]">运动算例 1</button>
    </div>
    <div className="h-[29px] flex items-center bg-linear-to-b from-[#eceef5] to-[#c4c7d6] border-b-2 border-[#eef0f6]">
      <div className="flex items-center gap-[7px] h-[27px] pl-1 pr-[10px] border-r-2 border-[#a3a5b2]">
        <i className="h-5 mr-1 border-l-2 border-dotted border-[#9c9eac]" />
        {sketchTools.map((d, i) => (
          <button key={i} aria-label={`捕捉 ${i + 1}`} className={i === 6 ? "ml-2" : ""}>
            <Svg><path d={d} stroke="#8c8d96" strokeWidth="1.600" /></Svg>
          </button>
        ))}
      </div>
    </div>
    <footer className="h-[25px] flex items-center pl-[3px] pb-1 border-t-2 border-[#54565f] bg-linear-to-b from-[#c9ccdc] to-[#b4b7c8]">
      <span>JXY-djg-009</span>
      <div className="ml-auto flex items-center h-full pr-[14px]">
        <i className="w-px h-3 bg-white mr-[7px]" />
        <i className="w-px h-3 bg-white mr-1" />
        <span>正在编辑：零件</span>
        <i className="w-px h-3 bg-white ml-[6px] mr-2" />
        <i className="w-px h-3 bg-white mr-2" />
        <i className="w-px h-3 bg-white mr-[11px]" />
        <button className="w-[13px] h-[13px] leading-[11px] border border-[#2b7040] bg-[#eaf6e6] text-[#0b8a20] font-bold">?</button>
        <button aria-label="标签" className="ml-[51px]"><Icon name="tag" /></button>
      </div>
    </footer>
  </>
);

const Taskbar = () => (
  <div className="h-[30px] flex items-center relative bg-linear-to-b from-[#3f84ee] via-[#245adb] via-20% to-[#1d4fc4] text-white">
    <button className="w-24 h-full flex items-center gap-[6px] pl-[10px] rounded-r-[10px] bg-linear-to-b from-[#5eac5c] via-[#3c9340] via-25% to-[#2f8133] text-[18px] italic">
      <svg viewBox="0 0 18 16" className="w-[19px] h-[17px]" aria-hidden="true">
        <path d="M2 2q3-2 6 0L7 7q-3-2-6 0z" fill="#f0562a" />
        <path d="M9 2.500q3 2 7 0l-1.500 5q-3 2-6.500 0z" fill="#8ed04a" />
        <path d="M1 8q3-2 6 0l-1 5q-3-2-6 0z" fill="#5b9df5" />
        <path d="M8 8.500q3 2 6.500 0L13 14q-3 1.500-6.500 0z" fill="#fbd13c" />
      </svg>
      开始
    </button>
    <div className="flex gap-2 pl-3 pr-[10px]">
      <button aria-label="显示桌面">
        <Svg><circle cx="8" cy="8" r="6" fill="#7fa3c8" /><path d="M8 2.500L12.500 8 8 13 3.500 8z" fill="#fdf3c0" /></Svg>
      </button>
      <button aria-label="SolidWorks"><Icon name="swCube" /></button>
    </div>
    <button className="w-[158px] h-6 flex items-center gap-1 pl-[10px] rounded-[3px] bg-linear-to-b from-[#5a9bf8] to-[#3a7ff0]">
      <Svg><circle cx="8" cy="8" r="7.500" fill="#e8f8ea" /><path d="M4 8h8q0-4-4-4T4 8q0 4 4 4 2 0 3-1.500" stroke="#21a544" strokeWidth="2" /></Svg>
      三维网技术论坛&nbsp;&nbsp;...
    </button>
    <button className="ml-[2px] w-[160px] h-6 flex items-center gap-1 pl-[10px] rounded-[3px] border border-[#16378f] bg-[#1e4cb8] font-['DejaVu_Sans_Mono',monospace] text-[10px]">
      <Icon name="swCube" />
      SolidWorks Premi...
    </button>
    <div className="ml-auto w-[167px] h-full flex items-center justify-end gap-[5px] pr-3 border-l border-[#0b4fb5] bg-linear-to-b from-[#35a6f0] via-[#1290e2] via-20% to-[#0f80d5]">
      {["#c8d4a0", "#1a1a1a", "#b8d4f2", "#58b050", "#8ccc50", "#4d9a4a"].map((c) => (
        <svg key={c} viewBox="0 0 12 12" className="w-3 h-3 mb-2" aria-hidden="true">
          <circle cx="6" cy="6" r="5.500" fill={c} />
          <circle cx="6" cy="7" r="2.500" fill="#fff" fillOpacity=".7" />
        </svg>
      ))}
      <span className="ml-2 text-white/70">16:46</span>
    </div>
    <svg className="absolute right-3 bottom-px w-[210px] h-[22px]" viewBox="0 0 210 22">
      <text x="1" y="17" fontFamily="'DejaVu Sans', 'Noto Sans CJK SC', sans-serif" fontWeight="bold" fill="#e8202a" stroke="#fff" strokeWidth="2.500" paintOrder="stroke">
        <tspan fontSize="17">三维网</tspan>
        <tspan fontSize="15">www.3dportal.cn</tspan>
      </text>
    </svg>
  </div>
);

const App = () => {
  return (
    <div className="min-h-screen flex flex-col overflow-hidden text-[12px] leading-4 text-black bg-[#c4c8d3] font-['Liberation_Sans','Noto_Sans_CJK_SC',sans-serif]">
      <TitleBar />
      <Ribbon />
      <TabRow />
      <div className="flex-1 flex">
        <FeaturePanel />
        <Viewport />
      </div>
      <Bottom />
      <Taskbar />
    </div>
  );
};

export default App;
